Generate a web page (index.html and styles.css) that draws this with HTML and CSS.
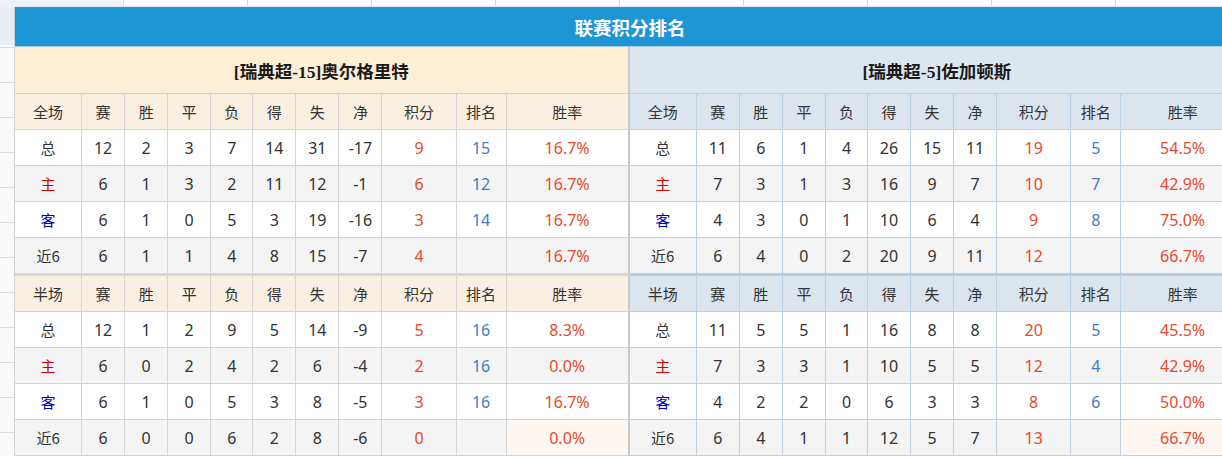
FILE: index.html
```html
<!DOCTYPE html>
<html lang="zh-CN">
<head>
<meta charset="utf-8">
<title>联赛积分排名</title>
<link rel="stylesheet" href="styles.css">
</head>
<body>
<div class="page">
  <div class="corner"></div>
  <div class="topstrip"></div>
  <div class="leftstrip"></div>
  <div class="main">
    <table class="standings">
      <colgroup>
        <col class="c-type"><col class="c-n"><col class="c-n"><col class="c-n"><col class="c-n2"><col class="c-n"><col class="c-n"><col class="c-n"><col class="c-pts"><col class="c-rank"><col class="c-rate">
        <col class="c-type"><col class="c-n"><col class="c-n"><col class="c-n"><col class="c-n2"><col class="c-n"><col class="c-n"><col class="c-n"><col class="c-pts"><col class="c-rank"><col class="c-rate">
      </colgroup>
      <tr class="title-row"><td colspan="22">联赛积分排名</td></tr>
      <tr class="team-row">
        <td colspan="11" class="team home">[瑞典超-15]奥尔格里特</td>
        <td colspan="11" class="team away">[瑞典超-5]佐加顿斯</td>
      </tr>
      <tr class="head-row">
        <td>全场</td><td>赛</td><td>胜</td><td>平</td><td>负</td><td>得</td><td>失</td><td>净</td><td>积分</td><td>排名</td><td>胜率</td>
        <td>全场</td><td>赛</td><td>胜</td><td>平</td><td>负</td><td>得</td><td>失</td><td>净</td><td>积分</td><td>排名</td><td>胜率</td>
      </tr>
      <tr class="data-row">
        <td>总</td><td>12</td><td>2</td><td>3</td><td>7</td><td>14</td><td>31</td><td>-17</td><td>9</td><td>15</td><td>16.7%</td>
        <td>总</td><td>11</td><td>6</td><td>1</td><td>4</td><td>26</td><td>15</td><td>11</td><td>19</td><td>5</td><td>54.5%</td>
      </tr>
      <tr class="data-row alt">
        <td class="home-lbl">主</td><td>6</td><td>1</td><td>3</td><td>2</td><td>11</td><td>12</td><td>-1</td><td>6</td><td>12</td><td>16.7%</td>
        <td class="home-lbl">主</td><td>7</td><td>3</td><td>1</td><td>3</td><td>16</td><td>9</td><td>7</td><td>10</td><td>7</td><td>42.9%</td>
      </tr>
      <tr class="data-row">
        <td class="away-lbl">客</td><td>6</td><td>1</td><td>0</td><td>5</td><td>3</td><td>19</td><td>-16</td><td>3</td><td>14</td><td>16.7%</td>
        <td class="away-lbl">客</td><td>4</td><td>3</td><td>0</td><td>1</td><td>10</td><td>6</td><td>4</td><td>9</td><td>8</td><td>75.0%</td>
      </tr>
      <tr class="data-row alt">
        <td>近6</td><td>6</td><td>1</td><td>1</td><td>4</td><td>8</td><td>15</td><td>-7</td><td>4</td><td></td><td>16.7%</td>
        <td>近6</td><td>6</td><td>4</td><td>0</td><td>2</td><td>20</td><td>9</td><td>11</td><td>12</td><td></td><td>66.7%</td>
      </tr>
      <tr class="head-row section">
        <td>半场</td><td>赛</td><td>胜</td><td>平</td><td>负</td><td>得</td><td>失</td><td>净</td><td>积分</td><td>排名</td><td>胜率</td>
        <td>半场</td><td>赛</td><td>胜</td><td>平</td><td>负</td><td>得</td><td>失</td><td>净</td><td>积分</td><td>排名</td><td>胜率</td>
      </tr>
      <tr class="data-row">
        <td>总</td><td>12</td><td>1</td><td>2</td><td>9</td><td>5</td><td>14</td><td>-9</td><td>5</td><td>16</td><td>8.3%</td>
        <td>总</td><td>11</td><td>5</td><td>5</td><td>1</td><td>16</td><td>8</td><td>8</td><td>20</td><td>5</td><td>45.5%</td>
      </tr>
      <tr class="data-row alt">
        <td class="home-lbl">主</td><td>6</td><td>0</td><td>2</td><td>4</td><td>2</td><td>6</td><td>-4</td><td>2</td><td>16</td><td>0.0%</td>
        <td class="home-lbl">主</td><td>7</td><td>3</td><td>3</td><td>1</td><td>10</td><td>5</td><td>5</td><td>12</td><td>4</td><td>42.9%</td>
      </tr>
      <tr class="data-row">
        <td class="away-lbl">客</td><td>6</td><td>1</td><td>0</td><td>5</td><td>3</td><td>8</td><td>-5</td><td>3</td><td>16</td><td>16.7%</td>
        <td class="away-lbl">客</td><td>4</td><td>2</td><td>2</td><td>0</td><td>6</td><td>3</td><td>3</td><td>8</td><td>6</td><td>50.0%</td>
      </tr>
      <tr class="data-row alt last">
        <td>近6</td><td>6</td><td>0</td><td>0</td><td>6</td><td>2</td><td>8</td><td>-6</td><td>0</td><td></td><td class="hl">0.0%</td>
        <td>近6</td><td>6</td><td>4</td><td>1</td><td>1</td><td>12</td><td>5</td><td>7</td><td>13</td><td></td><td class="hl">66.7%</td>
      </tr>
    </table>
  </div>
</div>
</body>
</html>
```

FILE: styles.css
```css
html, body {
  margin: 0;
  padding: 0;
  background: #ffffff;
  overflow: hidden;
}

.page {
  display: grid;
  grid-template-columns: 15px 1fr;
  grid-template-rows: 7px auto;
  width: 1260px;
  font-family: "Noto Sans", "Noto Sans CJK SC", sans-serif;
  color: #333;
}

.corner {
  background: #eef2f6;
}

.topstrip {
  background:
    linear-gradient(to right, #eef2f6 0, #eef2f6 107px, transparent 107px),
    repeating-linear-gradient(to right, transparent 0, transparent 108px, #d8d8d8 108px, #d8d8d8 109px, transparent 109px, transparent 124px);
  border-bottom: 1px solid #e3e8ee;
  box-sizing: border-box;
}

.leftstrip {
  background:
    linear-gradient(to bottom, #e8eef5 0, #e8eef5 38px, transparent 38px),
    repeating-linear-gradient(to bottom, transparent 0, transparent 5px, #dcdcdc 5px, #dcdcdc 6px, transparent 6px, transparent 35px);
  background-color: #fafafa;
  border-right: 1px solid #d0d0d0;
  box-sizing: border-box;
}

.main {
  min-width: 0;
}

.standings {
  border-collapse: separate;
  border-spacing: 0;
  table-layout: fixed;
  width: 1230px;
}

.c-type { width: 67px; }
.c-n { width: 43px; }
.c-n2 { width: 42px; }
.c-pts { width: 74px; }
.c-rank { width: 50px; }
.c-rate { width: 123px; }

.standings td {
  padding: 0;
  text-align: center;
  vertical-align: middle;
  font-size: 16px;
  white-space: nowrap;
  border-right: 1px solid #d4d4d4;
  border-bottom: 1px solid #d4d4d4;
}

.title-row td {
  height: 40px;
  background: #1e95d5;
  color: #ffffff;
  font-size: 18.5px;
  font-weight: bold;
  font-family: "Noto Sans CJK SC", sans-serif;
  border-right: none;
  border-bottom: 1px solid #a9cde6;
  box-sizing: border-box;
}

.team-row td {
  height: 47px;
  box-sizing: border-box;
  font-family: "Liberation Serif", "Noto Sans CJK SC", serif;
  font-weight: bold;
  font-size: 17.5px;
  color: #1a1a1a;
}

.team.home {
  background: #fcefd6;
  border-right: 2px solid #c9c9c9;
  border-bottom-color: #d8d2c6;
}

.team.away {
  background: #dde6ee;
  border-bottom-color: #bcd1e2;
}

.head-row td {
  height: 36px;
  box-sizing: border-box;
  font-family: "Noto Sans CJK SC", sans-serif;
  font-size: 15px;
  color: #333;
}

.head-row td:nth-child(-n+11) {
  background: #f9f0e2;
}

.head-row td:nth-child(n+12) {
  background: #dce5ee;
}

.head-row.section td {
  border-top: 2px solid #d6d6d6;
  height: 38px;
}

.head-row.section td:nth-child(n+12) {
  border-top-color: #b6cde0;
}

.data-row td {
  height: 36px;
  box-sizing: border-box;
  background: #ffffff;
}

.data-row.alt td {
  background: #f4f4f4;
}

.data-row td:nth-child(1),
.data-row td:nth-child(12) {
  font-family: "Noto Sans CJK SC", "Noto Sans", sans-serif;
  font-size: 15px;
}

.standings td:nth-child(n+12) {
  border-right-color: #bcd2e4;
  border-bottom-color: #bcd2e4;
}

.head-row td:nth-child(11),
.data-row td:nth-child(11) {
  border-right: 2px solid #c9c9c9;
}

.data-row td:nth-child(9),
.data-row td:nth-child(20),
.data-row td:nth-child(11),
.data-row td:nth-child(22) {
  color: #e64a2e;
}

.data-row td:nth-child(10),
.data-row td:nth-child(21) {
  color: #3f7cc4;
}

.home-lbl { color: #d20000; }
.away-lbl { color: #0000c0; }

.data-row.last td.hl {
  background: #fdf6f1;
}
```
